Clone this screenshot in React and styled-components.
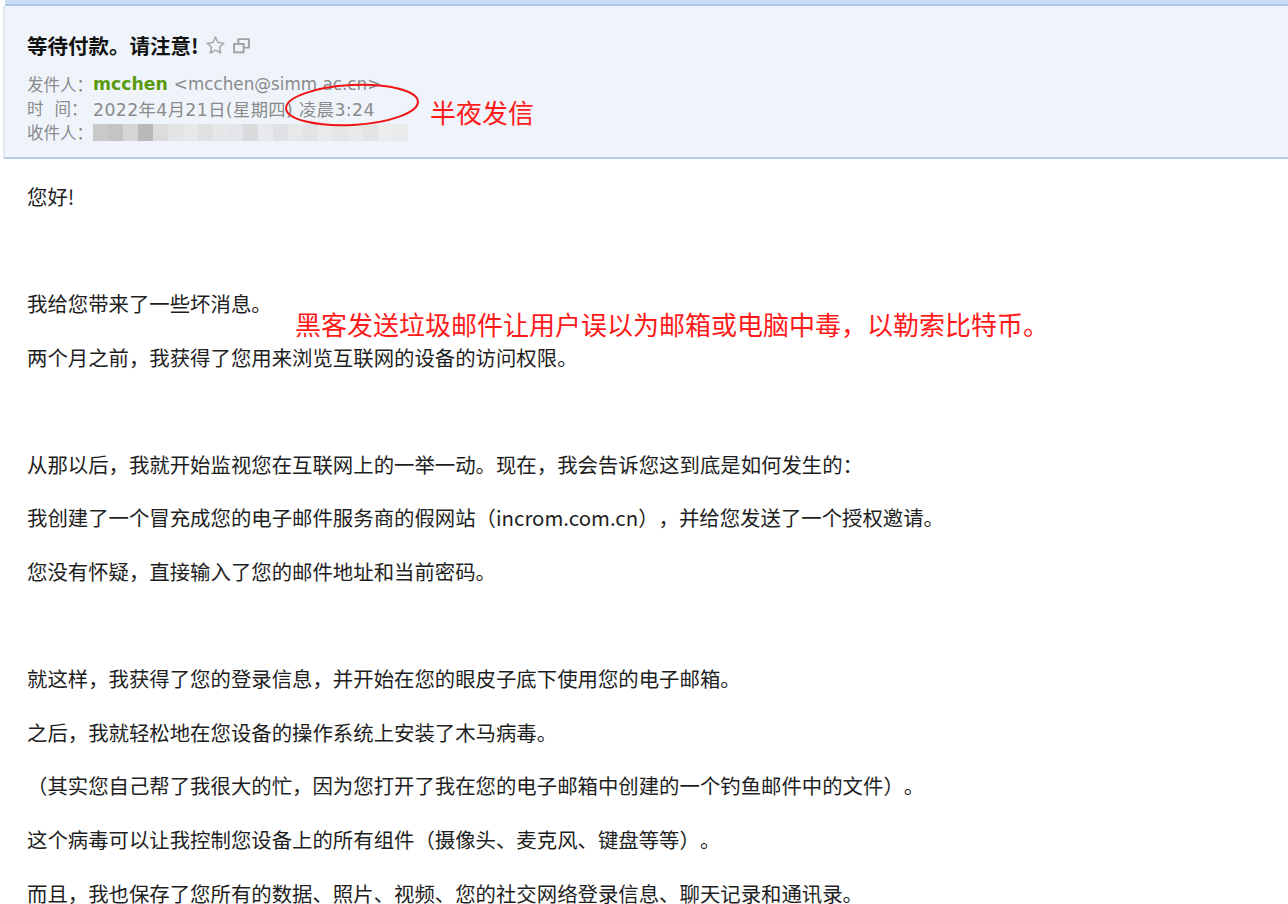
import React from 'react';
import styled, { createGlobalStyle } from 'styled-components';

const GlobalStyle = createGlobalStyle`
  * { margin: 0; padding: 0; box-sizing: border-box; }
  body {
    background: #ffffff;
    font-family: "Noto Sans CJK SC", "Noto Sans", sans-serif;
    color: #222;
    overflow: hidden;
    text-spacing-trim: space-all;
  }
`;

const Page = styled.div`
  position: relative;
  width: 1288px;
  height: 904px;
  overflow: hidden;
  border-left: 3px solid #fff;
`;

const TopStrip = styled.div`
  height: 6px;
  background: #c9def4;
  border-bottom: 2px solid #aac6e8;
  margin-left: 2px;
`;

const Header = styled.div`
  position: relative;
  background: #eff4fb;
  border-left: 2px solid #dfe7f2;
  border-bottom: 2px solid #b8cce6;
  height: 153px;
  padding: 26px 0 0 22px;
`;

const Title = styled.div`
  display: flex;
  align-items: center;
  gap: 6px;
  font-size: 20.5px;
  font-weight: 700;
  color: #111;
  height: 26px;
`;

const IconBtn = styled.span`
  display: inline-flex;
  align-items: center;
`;

const Meta = styled.div`
  margin-top: 14px;
  display: flex;
  flex-direction: column;
`;

const MetaRow = styled.div`
  display: flex;
  align-items: center;
  height: 24px;
  font-family: "DejaVu Sans", "Noto Sans CJK SC", sans-serif;
  font-size: 17.3px;
  letter-spacing: 0.4px;
  color: #8a8a8a;
  white-space: nowrap;
`;

const Label = styled.span`
  width: 66px;
  flex: none;
  white-space: pre;
  font-size: 16.5px;
  letter-spacing: 0;
  font-family: "Noto Sans CJK SC", sans-serif;
`;

const Sender = styled.span`
  color: #5a9a0e;
  font-weight: 700;
  margin-right: 6px;
  letter-spacing: 0;
`;

const Email = styled.span`
  letter-spacing: 0;
  font-size: 16.8px;
`;

const Mosaic = styled.div`
  display: flex;
  height: 17px;
  filter: blur(0.6px);
`;

const Tile = styled.span`
  width: 15px;
  height: 17px;
  background: ${p => p.c};
`;

const Ellipse = styled.svg`
  position: absolute;
  left: 274px;
  top: 75px;
  overflow: visible;
`;

const Note = styled.div`
  position: absolute;
  color: #ff1a1a;
  font-size: ${p => p.size}px;
  white-space: nowrap;
  line-height: 1;
`;

const Body = styled.div`
  position: relative;
  padding: 10px 0 0 24px;
`;

const Para = styled.p`
  font-size: 20.4px;
  line-height: 26px;
  padding: 13.8px 0;
  color: #1e1e1e;
  white-space: nowrap;
`;

const tiles = ['#c9c9c9', '#c4c4c4', '#d6d6d6', '#b9bab9', '#dcdcdc', '#e2e4e6', '#e6e8ea', '#dfe1e3',
  '#e5e7e9', '#e3e5e8', '#d9dbdd', '#e7e9ec', '#dfe1e4', '#e6e8ea', '#e1e3e5', '#e8eaec', '#e4e6e8',
  '#e7e9eb', '#e2e4e6', '#eaecee', '#e9ebed'];

const paras = [
  '您好!',
  '',
  '我给您带来了一些坏消息。',
  '两个月之前，我获得了您用来浏览互联网的设备的访问权限。',
  '',
  '从那以后，我就开始监视您在互联网上的一举一动。现在，我会告诉您这到底是如何发生的：',
  '我创建了一个冒充成您的电子邮件服务商的假网站（incrom.com.cn），并给您发送了一个授权邀请。',
  '您没有怀疑，直接输入了您的邮件地址和当前密码。',
  '',
  '就这样，我获得了您的登录信息，并开始在您的眼皮子底下使用您的电子邮箱。',
  '之后，我就轻松地在您设备的操作系统上安装了木马病毒。',
  '（其实您自己帮了我很大的忙，因为您打开了我在您的电子邮箱中创建的一个钓鱼邮件中的文件）。',
  '这个病毒可以让我控制您设备上的所有组件（摄像头、麦克风、键盘等等）。',
  '而且，我也保存了您所有的数据、照片、视频、您的社交网络登录信息、聊天记录和通讯录。',
];

export default function App() {
  return (
    <>
      <GlobalStyle />
      <Page>
        <TopStrip />
        <Header>
          <Title>
            等待付款。请注意!
            <IconBtn>
              <svg width="21" height="21" viewBox="0 0 24 24" fill="none" stroke="#a8a8a8" strokeWidth="1.8" strokeLinejoin="round">
                <path d="M12 2.5l2.9 6.1 6.6.8-4.9 4.6 1.3 6.6L12 17.3l-5.9 3.3 1.3-6.6-4.9-4.6 6.6-.8z" />
              </svg>
            </IconBtn>
            <IconBtn>
              <svg width="19" height="19" viewBox="0 0 18 18" fill="none" stroke="#a0a0a0" strokeWidth="1.8">
                <rect x="2" y="7.5" width="9" height="8" />
                <path d="M6 7.5V3h10v8h-5" />
              </svg>
            </IconBtn>
          </Title>
          <Meta>
            <MetaRow>
              <Label>发件人：</Label>
              <Sender>mcchen</Sender>
              <Email>&lt;mcchen@simm.ac.cn&gt;</Email>
            </MetaRow>
            <MetaRow>
              <Label>{'时   间：'}</Label>
              2022年4月21日(星期四) 凌晨3:24
            </MetaRow>
            <MetaRow>
              <Label>收件人：</Label>
              <Mosaic>
                {tiles.map((c, i) => <Tile key={i} c={c} />)}
              </Mosaic>
            </MetaRow>
          </Meta>
          <Ellipse width="142" height="46" viewBox="0 0 142 46">
            <ellipse cx="73" cy="24" rx="66" ry="20" fill="none" stroke="#f01414" strokeWidth="2" transform="rotate(-3 73 24)" />
          </Ellipse>
          <Note size={26} style={{ left: 425, top: 93 }}>半夜发信</Note>
        </Header>
        <Body>
          {paras.map((t, i) => <Para key={i}>{t || '\u00a0'}</Para>)}
          <Note size={26} style={{ left: 292, top: 152 }}>黑客发送垃圾邮件让用户误以为邮箱或电脑中毒，以勒索比特币。</Note>
        </Body>
      </Page>
    </>
  );
}
